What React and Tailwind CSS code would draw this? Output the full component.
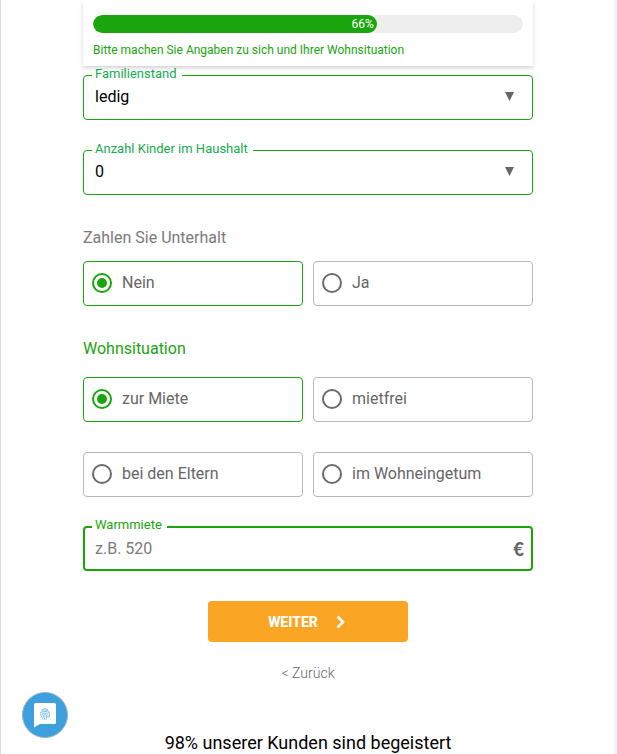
import { useState } from 'react';

const SelectField = ({ id, label, value, options, onChange }) => (
  <div className="relative">
    <label
      htmlFor={id}
      className="absolute -top-[9px] left-[9px] bg-white pr-[5px] pl-[3px] text-[13px] leading-4 text-[#16ab4e]"
    >
      {label}
    </label>
    <select
      id={id}
      value={value}
      onChange={(e) => onChange(e.target.value)}
      className="block h-[45px] w-full appearance-none rounded border border-[#1aa50e] bg-white pr-10 pb-[2px] pl-[11px] text-base text-black focus:outline-none"
    >
      {options.map((option) => (
        <option key={option} value={option}>{option}</option>
      ))}
    </select>
    <svg viewBox="0 0 9 9" className="pointer-events-none absolute top-[17px] right-[19px] size-[9px]">
      <path d="M0 0h9L4.5 9z" fill="#666" />
    </svg>
  </div>
);

const RadioOption = ({ name, label, selected, onSelect }) => (
  <label
    className={`flex h-[45px] items-center gap-2.5 rounded border px-2 pb-[2px] text-base text-[#666] ${selected ? 'border-[#1aa50e]' : 'border-[#b9b9b9]'}`}
  >
    <input
      type="radio"
      name={name}
      value={label}
      checked={selected}
      onChange={() => onSelect(label)}
      className="grid size-5 shrink-0 appearance-none place-content-center rounded-full border-2 border-[#6b6b6b] before:size-2.5 before:rounded-full checked:border-[#1aa50e] checked:before:bg-[#1aa50e]"
    />
    <span>{label}</span>
  </label>
);

const housingOptions = ['zur Miete', 'mietfrei', 'bei den Eltern', 'im Wohneingetum'];

const App = () => {
  const [familyStatus, setFamilyStatus] = useState('ledig');
  const [children, setChildren] = useState('0');
  const [alimony, setAlimony] = useState('Nein');
  const [housing, setHousing] = useState('zur Miete');
  const [rent, setRent] = useState('');
  const progress = 66;

  return (
    <div className="min-h-screen border-r-[3px] border-l border-r-[#eff4fc] border-l-[#d5d9e9] bg-white pl-px font-['Roboto',sans-serif]">
      <main className="mx-auto max-w-[450px]">
        {/* Progress header */}
        <header className="sticky top-0 z-10 h-[66px] bg-white px-2.5 pt-[15px] shadow-[0_2px_4px_rgba(0,0,0,0.18)]">
          <div className="h-[18px] overflow-hidden rounded-full bg-[#eee]">
            <div
              className="h-full rounded-full bg-[#1aa50e] pr-[3px] text-right text-xs leading-[18px] text-white"
              style={{ width: `${progress}%` }}
            >
              {progress}%
            </div>
          </div>
          <p className="mt-2 text-xs leading-[18px] text-[#1aa50e]">
            Bitte machen Sie Angaben zu sich und Ihrer Wohnsituation
          </p>
        </header>

        <form className="pt-[9px]" onSubmit={(e) => e.preventDefault()}>
          <div className="grid gap-[30px]">
            <SelectField
              id="familyStatus"
              label="Familienstand"
              value={familyStatus}
              options={['ledig', 'verheiratet', 'geschieden', 'verwitwet']}
              onChange={setFamilyStatus}
            />
            <SelectField
              id="children"
              label="Anzahl Kinder im Haushalt"
              value={children}
              options={['0', '1', '2', '3', '4']}
              onChange={setChildren}
            />
          </div>

          <fieldset className="mt-[31px]">
            <legend className="mb-[11px] text-base text-[#7a7a7a]">Zahlen Sie Unterhalt</legend>
            <div className="grid grid-cols-2 gap-2.5">
              {['Nein', 'Ja'].map((option) => (
                <RadioOption
                  key={option}
                  name="alimony"
                  label={option}
                  selected={alimony === option}
                  onSelect={setAlimony}
                />
              ))}
            </div>
          </fieldset>

          <fieldset className="mt-[31px]">
            <legend className="mb-4 text-base text-[#1aa50e]">Wohnsituation</legend>
            <div className="grid grid-cols-2 gap-x-2.5 gap-y-[30px]">
              {housingOptions.map((option) => (
                <RadioOption
                  key={option}
                  name="housing"
                  label={option}
                  selected={housing === option}
                  onSelect={setHousing}
                />
              ))}
            </div>
          </fieldset>

          <div className="relative mt-[29px]">
            <label
              htmlFor="rent"
              className="absolute -top-[9px] left-[9px] bg-white pr-[5px] pl-[3px] text-[13px] leading-4 text-[#1aa50e]"
            >
              Warmmiete
            </label>
            <input
              id="rent"
              type="text"
              value={rent}
              onChange={(e) => setRent(e.target.value)}
              placeholder="z.B. 520"
              className="block h-[45px] w-full rounded border-2 border-[#1aa50e] pr-10 pl-2.5 text-base text-black placeholder:text-[#7a7a7a] focus:outline-none"
            />
            <span className="pointer-events-none absolute top-[11px] right-[9px] font-['Lato',sans-serif] text-lg leading-6 font-black text-[#666]">€</span>
          </div>

          {/* Form actions */}
          <div className="mt-[30px] flex flex-col items-center">
            <button
              type="submit"
              className="flex h-[41px] w-[200px] items-center justify-center gap-4 rounded bg-[#faa523] text-sm font-extrabold text-white"
            >
              WEITER
              <svg viewBox="0 0 12 14" className="size-3.5" fill="none" stroke="currentColor" strokeWidth="2.6">
                <path d="M2.5 1.5L8 7L2.5 12.5" />
              </svg>
            </button>
            <a href="#" className="mt-[21px] text-sm font-light text-[#666]">&lt; Zurück</a>
          </div>
        </form>

        <h2 className="mt-[46px] text-center text-lg text-black">98% unserer Kunden sind begeistert</h2>
      </main>

      <button
        type="button"
        aria-label="Datenschutz"
        className="fixed bottom-4 left-[22px] flex size-[46px] items-center justify-center rounded-full border border-[#8fb4cc] bg-[#3d9fdc]"
      >
        <svg viewBox="0 0 24 26" className="h-[26px] w-6" fill="none">
          <path d="M2.500 1h19q1.500 0 1.500 1.500v18q0 1.500-1.500 1.500H7L1 25.500V2.500Q1 1 2.500 1z" fill="#fff" />
          <g stroke="#3d9fdc" strokeWidth="0.6" strokeLinecap="round">
            <path d="M9 7.500q3-2 6 0M7.500 10.500q1.500-2.500 4.500-2.500t4.500 2.500M7.500 13q0-3.500 4.500-3.500t4.500 3.500v1.500" />
            <path d="M8 15.500q1-1 1-2.500 0-2 3-2t3 2v2.500M9.500 17q1-1.500 1-3.500 0-1 1.500-1t1.500 1.500-.500 3.500M12 14q0 2-1 3.800" />
          </g>
        </svg>
      </button>
    </div>
  );
};

export default App;
